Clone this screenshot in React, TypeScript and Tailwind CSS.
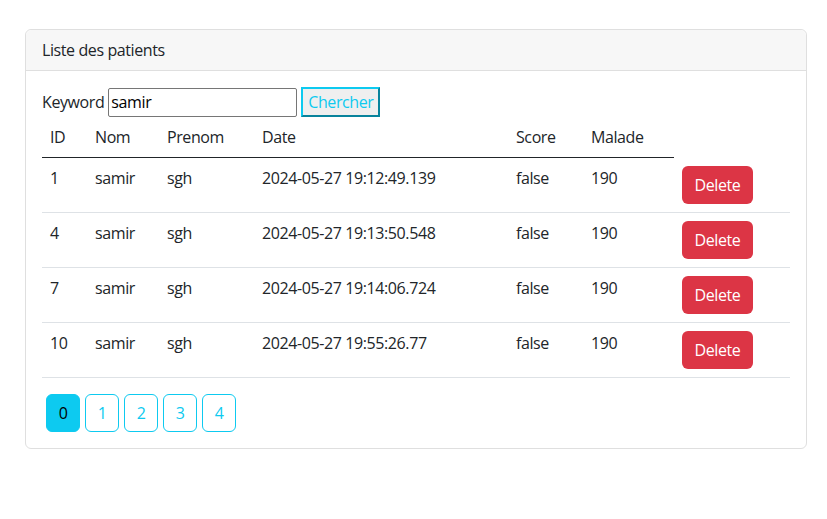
import React from "react";

const rows = [
  { id: "1", date: "2024-05-27 19:12:49.139" },
  { id: "4", date: "2024-05-27 19:13:50.548" },
  { id: "7", date: "2024-05-27 19:14:06.724" },
  { id: "10", date: "2024-05-27 19:55:26.77" },
];

export default function App() {
  return (
    <div
      className="min-h-[519px] bg-white text-[16px] leading-6 tracking-[-0.4px] text-[#212529]"
      style={{ fontFamily: '"Open Sans", "Noto Sans", sans-serif' }}
    >
      <div className="pl-[25px] pr-[20px] pt-[29px]">
        <div className="rounded-md border border-[#dfdfdf]">
          <div className="h-[41px] rounded-t-md border-b border-[#dfdfdf] bg-[#f7f7f7] px-4 py-2">
            Liste des patients
          </div>
          <div className="p-4">
            <div className="flex items-center">
              <span className="mr-[4px]">Keyword</span>
              <input
                className="h-[29px] w-[189px] rounded-[2px] border border-[#767676] px-[2px] text-black outline-none"
                defaultValue="samir"
              />
              <button className="ml-[4px] h-[30px] w-[79px] border-2 border-[#0dcaf0] bg-[#efefef] text-[#0dcaf0] [border-style:outset]">
                Chercher
              </button>
            </div>
            <table className="mb-4 w-full border-collapse text-left">
              <thead>
                <tr>
                  <th className="w-[45px] border-b border-[#212529] px-2 py-2 font-normal">ID</th>
                  <th className="w-[72px] border-b border-[#212529] px-2 py-2 font-normal">Nom</th>
                  <th className="w-[95px] border-b border-[#212529] px-2 py-2 font-normal">Prenom</th>
                  <th className="w-[254px] border-b border-[#212529] px-2 py-2 font-normal">Date</th>
                  <th className="w-[75px] border-b border-[#212529] px-2 py-2 font-normal">Score</th>
                  <th className="w-[91px] border-b border-[#212529] px-2 py-2 font-normal">Malade</th>
                </tr>
              </thead>
              <tbody>
                {rows.map((r) => (
                  <tr key={r.id} className="border-b border-[#dee2e6] align-top">
                    <td className="px-2 py-2">{r.id}</td>
                    <td className="px-2 py-2">samir</td>
                    <td className="px-2 py-2">sgh</td>
                    <td className="px-2 py-2">{r.date}</td>
                    <td className="px-2 py-2">false</td>
                    <td className="px-2 py-2">190</td>
                    <td className="px-2 py-2">
                      <button className="h-[38px] w-[71px] rounded-md bg-[#dc3545] text-white">
                        Delete
                      </button>
                    </td>
                  </tr>
                ))}
              </tbody>
            </table>
            <div className="flex gap-[5px] pl-[4px]">
              {["0", "1", "2", "3", "4"].map((p, i) => (
                <button
                  key={p}
                  className={
                    i === 0
                      ? "h-[38px] w-[34px] rounded-md border border-[#0dcaf0] bg-[#0dcaf0] text-black"
                      : "h-[38px] w-[34px] rounded-md border border-[#0dcaf0] bg-white text-[#0dcaf0]"
                  }
                >
                  {p}
                </button>
              ))}
            </div>
          </div>
        </div>
      </div>
    </div>
  );
}
